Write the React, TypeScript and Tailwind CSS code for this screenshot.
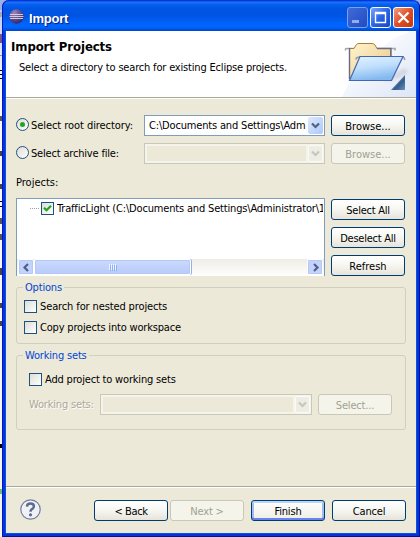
import type { ReactNode } from "react";

function Button({ children, disabled, primary, className = "" }: { children: ReactNode; disabled?: boolean; primary?: boolean; className?: string }) {
  const look = disabled
    ? "border-[#c9c7ba] bg-[#f5f4ea] text-[#a1a192]"
    : primary
      ? "border-[#003c74] bg-gradient-to-b from-white to-[#eeede5] text-black shadow-[inset_0_2px_0_#bcd4f6,inset_0_-2px_0_#6982ee,inset_2px_0_0_#a0bcf0,inset_-2px_0_0_#a0bcf0]"
      : "border-[#003c74] bg-gradient-to-b from-white via-[#f6f6f1] to-[#e6e3da] text-black";
  return (
    <button className={`flex h-[21px] w-[74px] shrink-0 items-center justify-center rounded-[3px] border pt-[2px] whitespace-nowrap ${look} ${className}`}>
      {children}
    </button>
  );
}

function Chevron({ dir, color }: { dir: "left" | "right" | "down"; color: string }) {
  const d = dir === "down" ? "M1 2.5 L4.5 6 L8 2.5" : dir === "left" ? "M6 1 L2.5 4.5 L6 8" : "M3 1 L6.5 4.5 L3 8";
  return (
    <svg width="9" height="9" viewBox="0 0 9 9" fill="none" stroke={color} strokeWidth="2.2">
      <path d={d} />
    </svg>
  );
}

function Combo({ value, disabled, className }: { value?: string; disabled?: boolean; className: string }) {
  return (
    <div className={`flex h-[21px] shrink-0 border p-px ${disabled ? "border-[#c9c7ba] bg-[#f5f4ea]" : "border-[#7f9db9] bg-white"} ${className}`}>
      <div className={`m-px min-w-0 flex-1 pl-[2px] leading-[16px] tracking-[-0.17px] whitespace-nowrap ${disabled ? "bg-[#ece9d8]" : "bg-white"}`}>{value}</div>
      <div className={`ml-px flex w-[15px] items-center justify-center rounded-[2px] ${disabled ? "border border-[#fbfaf5] bg-[#eeede5]" : "bg-gradient-to-br from-[#dfe8fe] to-[#aec8f7]"}`}>
        <Chevron dir="down" color={disabled ? "#c9c7ba" : "#4d6185"} />
      </div>
    </div>
  );
}

function Radio({ checked }: { checked?: boolean }) {
  return (
    <span className="flex h-[13px] w-[13px] shrink-0 items-center justify-center rounded-full border border-[#21517f] bg-gradient-to-br from-[#dcdcd7] to-white">
      {checked && <span className="h-[5px] w-[5px] rounded-full bg-[#21a621]" />}
    </span>
  );
}

function Check({ checked }: { checked?: boolean }) {
  return (
    <span className="flex h-[13px] w-[13px] shrink-0 items-center justify-center border border-[#1c5180] bg-gradient-to-br from-[#dcdcd7] to-white">
      {checked && (
        <svg width="9" height="9" viewBox="0 0 9 9" fill="none" stroke="#21a121" strokeWidth="2.2">
          <path d="M1 3.8 L3.5 6.3 L8 1.8" />
        </svg>
      )}
    </span>
  );
}

function Group({ title, className, children }: { title: string; className: string; children: ReactNode }) {
  return (
    <div className={`relative w-[390px] rounded-[3px] border border-[#d0d0bf] ${className}`}>
      <span className="absolute -top-[7px] left-[6px] bg-[#ece9d8] px-[2px] leading-[14px] whitespace-nowrap text-[#0046d5]">{title}</span>
      {children}
    </div>
  );
}

function EclipseLogo() {
  return (
    <svg width="15" height="15" viewBox="0 0 15 15">
      <defs>
        <radialGradient id="ball" cx="0.35" cy="0.25" r="0.8">
          <stop offset="0" stopColor="#9f87b5" />
          <stop offset="0.5" stopColor="#65528f" />
          <stop offset="1" stopColor="#30225f" />
        </radialGradient>
      </defs>
      <circle cx="7.5" cy="7.5" r="7.2" fill="url(#ball)" />
      <path d="M1 5.5h13M0.5 7.5h14M1 9.5h13" stroke="#e5ddee" strokeWidth="1" opacity="0.85" />
    </svg>
  );
}

function FolderBanner() {
  return (
    <svg width="74" height="66" viewBox="342 31 74 66" className="shrink-0">
      <defs>
        <linearGradient id="sky" x1="0" y1="0" x2="1" y2="1">
          <stop offset="0.2" stopColor="#ffffff" />
          <stop offset="1" stopColor="#dce5f7" />
        </linearGradient>
        <linearGradient id="blue" x1="0" y1="0" x2="0.3" y2="1">
          <stop offset="0" stopColor="#e4f3ff" />
          <stop offset="0.5" stopColor="#c0dffc" />
          <stop offset="1" stopColor="#83b9ef" />
        </linearGradient>
        <linearGradient id="tan" x1="0" y1="0" x2="1" y2="1">
          <stop offset="0" stopColor="#fff5d3" />
          <stop offset="1" stopColor="#eac57c" />
        </linearGradient>
        <linearGradient id="corner" x1="0" y1="0" x2="1" y2="1">
          <stop offset="0.3" stopColor="#9cb9d6" />
          <stop offset="0.6" stopColor="#315c8c" />
          <stop offset="1" stopColor="#6c91b8" />
        </linearGradient>
        <filter id="soft"><feGaussianBlur stdDeviation="1.6" /></filter>
      </defs>
      <path d="M416 31V97H342Q352 74 371 61Q388 35 416 31Z" fill="url(#sky)" />
      <path d="M382 80L404 68Q413 72 401 77L390 81Z" fill="#b9b6bd" opacity="0.4" filter="url(#soft)" />
      <path d="M345.5 50.5V49Q345.5 48.5 347 48.5H395V50.5" fill="none" stroke="#a7a7a7" strokeWidth="1.6" />
      <path d="M349.5 79V48.5H354L356.5 44.5Q357 43.5 359 43.5H372Q374 43.5 375 45L377 48.5H390.5V57L386 80Z" fill="url(#tan)" stroke="#ad7d2c" />
      <path d="M377 48.5H391V57M349.5 48V79" fill="none" stroke="#686b86" strokeWidth="1.4" />
      <path d="M356 59.5Q356 57 360 57H402Q405 57 404.5 60" fill="none" stroke="#9a9ca2" strokeWidth="1.6" />
      <path d="M349.5 80.5L360 56.5H403L391.5 80.5Z" fill="url(#blue)" stroke="#4267b5" strokeWidth="1.2" />
      <path d="M405 75V90H391Z" fill="url(#corner)" />
    </svg>
  );
}

function TitleButton({ kind }: { kind: "min" | "max" | "close" }) {
  const look = kind === "close"
    ? "border-white bg-gradient-to-br from-[#f19b80] via-[#df4d25] to-[#c33a12]"
    : kind === "max"
      ? "border-white bg-gradient-to-br from-[#7aa2fb] via-[#2a63e6] to-[#1747c8]"
      : "border-[#7b9eed] bg-gradient-to-br from-[#4169d8] to-[#1f4cc4]";
  return (
    <span className={`flex h-[21px] w-[21px] items-center justify-center rounded-[3px] border ${look}`}>
      <svg width="19" height="19" viewBox="0 0 19 19" fill="none" stroke="white">
        {kind === "min" && <path d="M4 13.5h7" stroke="#94acec" strokeWidth="3" />}
        {kind === "max" && <path d="M4.5 14.5v-10h10v10zM4 5.5h11" strokeWidth="1.4" />}
        {kind === "close" && <path d="M4.5 4.5l10 10M14.5 4.5l-10 10" strokeWidth="2.3" />}
      </svg>
    </span>
  );
}

const slivers = [
  "top-[12px] h-[5px] bg-[#aaa]", "top-[34px] h-[9px] bg-[#77558f]", "top-[55px] h-px bg-[#999]",
  "top-[70px] h-px bg-black", "top-[74px] h-px bg-black", "top-[78px] h-px bg-black",
  "top-[116px] h-[5px] bg-[#555]", "top-[151px] h-[5px] bg-[#444]", "top-[184px] h-[5px] bg-[#444]",
  "top-[201px] h-px bg-black", "top-[206px] h-px bg-black", "top-[218px] h-[6px] bg-[#555]", "top-[234px] h-[6px] bg-[#555]",
  "top-[268px] h-[7px] bg-[#444]", "top-[303px] h-[5px] bg-[#444]", "top-[321px] h-[5px] bg-[#444]",
  "top-[444px] h-[4px] bg-black", "top-[489px] h-[5px] bg-[#65c56e]",
];

export default function App() {
  return (
    <div className="relative flex h-[537px] w-[420px] overflow-hidden bg-[#f9f9fc] font-['DejaVu_Sans_Condensed','DejaVu_Sans',sans-serif] text-[11px] leading-[14px] tracking-[-0.18px] text-black [font-stretch:condensed]">
      <div className="relative w-[2px] shrink-0 bg-gradient-to-b from-[#b2c7f1] via-[#f9f9fc] via-15% to-[#f3f3ef]">
        {slivers.map((s) => <span key={s} className={`absolute left-0 w-[2px] ${s}`} />)}
      </div>
      <div className="absolute top-0 left-0 h-[10px] w-full bg-[#9caee6]" />
      <div className="relative flex h-[537px] w-[418px] flex-col rounded-t-[7px] bg-[#0831d9] pt-px shadow-[inset_1px_0_0_#0019cf,inset_-1px_-1px_0_#00138c]">
        <div className="mx-px flex h-[30px] shrink-0 items-center rounded-t-[6px] bg-[linear-gradient(#0058ee_0%,#1a70f4_5%,#0560ef_12%,#0055e5_25%,#0054e3_50%,#0065fd_78%,#0065fd_88%,#0044c8_100%)] pr-[5px] pl-[6px]">
          <EclipseLogo />
          <span className="ml-[5px] flex-1 pt-[5px] font-['Liberation_Sans',sans-serif] text-[13px] font-bold tracking-[-0.2px] text-white [text-shadow:1px_1px_1px_#0a1883]">Import</span>
          <div className="flex gap-[2px] pt-[3px]">
            <TitleButton kind="min" /><TitleButton kind="max" /><TitleButton kind="close" />
          </div>
        </div>
        <div className="mx-[3px] mb-[3px] flex min-h-0 flex-1 flex-col border border-t-0 border-[#0055e5] bg-[#ece9d8]">
          <header className="flex h-[66px] shrink-0 justify-between bg-white">
            <div className="pt-[8px] pl-[5px] whitespace-nowrap">
              <h1 className="text-[13px] leading-[16px] font-bold tracking-[-0.08px]">Import Projects</h1>
              <p className="mt-[6px] ml-[8px]">Select a directory to search for existing Eclipse projects.</p>
            </div>
            <FolderBanner />
          </header>
          <div className="h-[2px] shrink-0 border-t border-[#aca899] bg-white" />

          <main className="flex flex-1 flex-col pl-[10px]">
            <div className="mt-[16px] flex h-[21px] items-center">
              <label className="flex w-[128px] items-center gap-[2px] pb-[2px] tracking-[-0.06px] whitespace-nowrap"><Radio checked /><span className="pt-[2px]">Select root directory:</span></label>
              <Combo value="C:\Documents and Settings\Adm" className="w-[181px]" />
              <Button className="ml-[6px] tracking-normal">Browse...</Button>
            </div>
            <div className="mt-[7px] flex h-[21px] items-center">
              <label className="flex w-[128px] items-center gap-[2px] pb-[2px] whitespace-nowrap"><Radio /><span className="pt-[2px]">Select archive file:</span></label>
              <Combo disabled className="w-[181px]" />
              <Button disabled className="ml-[6px] tracking-normal">Browse...</Button>
            </div>
            <div className="mt-[12px] h-[14px] tracking-normal">Projects:</div>

            <div className="mt-[8px] flex h-[78px] shrink-0">
              <div className="flex w-[309px] flex-col border border-b-0 border-[#7f9db9] bg-white">
                <div className="flex h-[19px] items-center pl-[13px] whitespace-nowrap">
                  <span className="mr-[2px] w-[9px] border-t border-dotted border-[#a0a0a0]" />
                  <Check checked />
                  <span className="ml-[3px] w-[266px] overflow-hidden tracking-[-0.17px]">TrafficLight (C:\Documents and Settings\Administrator\1</span>
                </div>
                <div className="mt-auto flex h-[17px] justify-between bg-gradient-to-b from-[#efede5] to-white px-px pb-px">
                  <div className="flex">
                    <span className="flex w-[16px] items-center justify-center rounded-[2px] border border-white bg-[#c3d3fd] shadow-[inset_0_0_0_1px_#b4c8f6]"><Chevron dir="left" color="#4d6185" /></span>
                    <span className="flex w-[157px] items-center justify-center gap-px rounded-[2px] border border-white bg-gradient-to-b from-[#cbdafd] to-[#b7cbfa] shadow-[1px_0_0_#98b0dd,inset_0_0_0_1px_#b4c8f6]">
                      {[0, 1, 2, 3].map((i) => <i key={i} className="h-[6px] w-px bg-[#eef4fe] shadow-[1px_1px_0_#8cb0f8]" />)}
                    </span>
                  </div>
                  <span className="flex w-[16px] items-center justify-center rounded-[2px] border border-white bg-[#c3d3fd] shadow-[inset_0_0_0_1px_#b4c8f6]"><Chevron dir="right" color="#4d6185" /></span>
                </div>
              </div>
              <div className="ml-[6px] flex flex-col gap-[7px] pt-px">
                <Button className="tracking-[-0.25px]">Select All</Button><Button className="tracking-[-0.25px]">Deselect All</Button><Button className="tracking-normal">Refresh</Button>
              </div>
            </div>

            <Group title="Options" className="mt-[11px] h-[57px] shrink-0">
              <div className="flex flex-col gap-[8px] pt-[12px] pl-[7px]">
                <label className="flex h-[13px] items-center gap-[3px] tracking-[-0.12px]"><Check /><span className="pt-px">Search for nested projects</span></label>
                <label className="flex h-[13px] items-center gap-[3px]"><Check /><span className="pt-px">Copy projects into workspace</span></label>
              </div>
            </Group>
            <Group title="Working sets" className="mt-[11px] h-[75px] shrink-0">
              <label className="mt-[17px] ml-[12px] flex h-[13px] items-center gap-[3px]"><Check /><span className="pt-px">Add project to working sets</span></label>
              <div className="mt-[8px] ml-[12px] flex h-[21px] items-center">
                <span className="w-[71px] whitespace-nowrap text-[#aca899] [text-shadow:1px_1px_0_white]">Working sets:</span>
                <Combo disabled className="w-[212px]" />
                <Button disabled className="ml-[6px]">Select...</Button>
              </div>
            </Group>
          </main>

          <footer className="flex h-[47px] shrink-0 border-t border-[#aca899] pt-[13px] pl-[14px] shadow-[inset_0_1px_0_white]">
            <svg width="21" height="21" viewBox="0 0 21 21" className="-mt-px">
              <circle cx="10.5" cy="10.5" r="9.7" fill="#f1f1f4" stroke="#6c7fa2" strokeWidth="1.2" />
              <path d="M6.9 7.6Q7.1 4.4 10.5 4.4Q13.9 4.4 13.9 7.3Q13.9 9 12.1 10Q10.5 10.9 10.5 12.8" fill="none" stroke="#5a6c91" strokeWidth="2.5" />
              <circle cx="10.5" cy="15.8" r="1.6" fill="#5a6c91" />
            </svg>
            <Button className="ml-[53px] tracking-[-0.4px]">&lt; Back</Button>
            <Button disabled className="ml-[2px]">Next &gt;</Button>
            <Button primary className="ml-[7px]">Finish</Button>
            <Button className="ml-[7px]">Cancel</Button>
          </footer>
        </div>
      </div>
    </div>
  );
}
